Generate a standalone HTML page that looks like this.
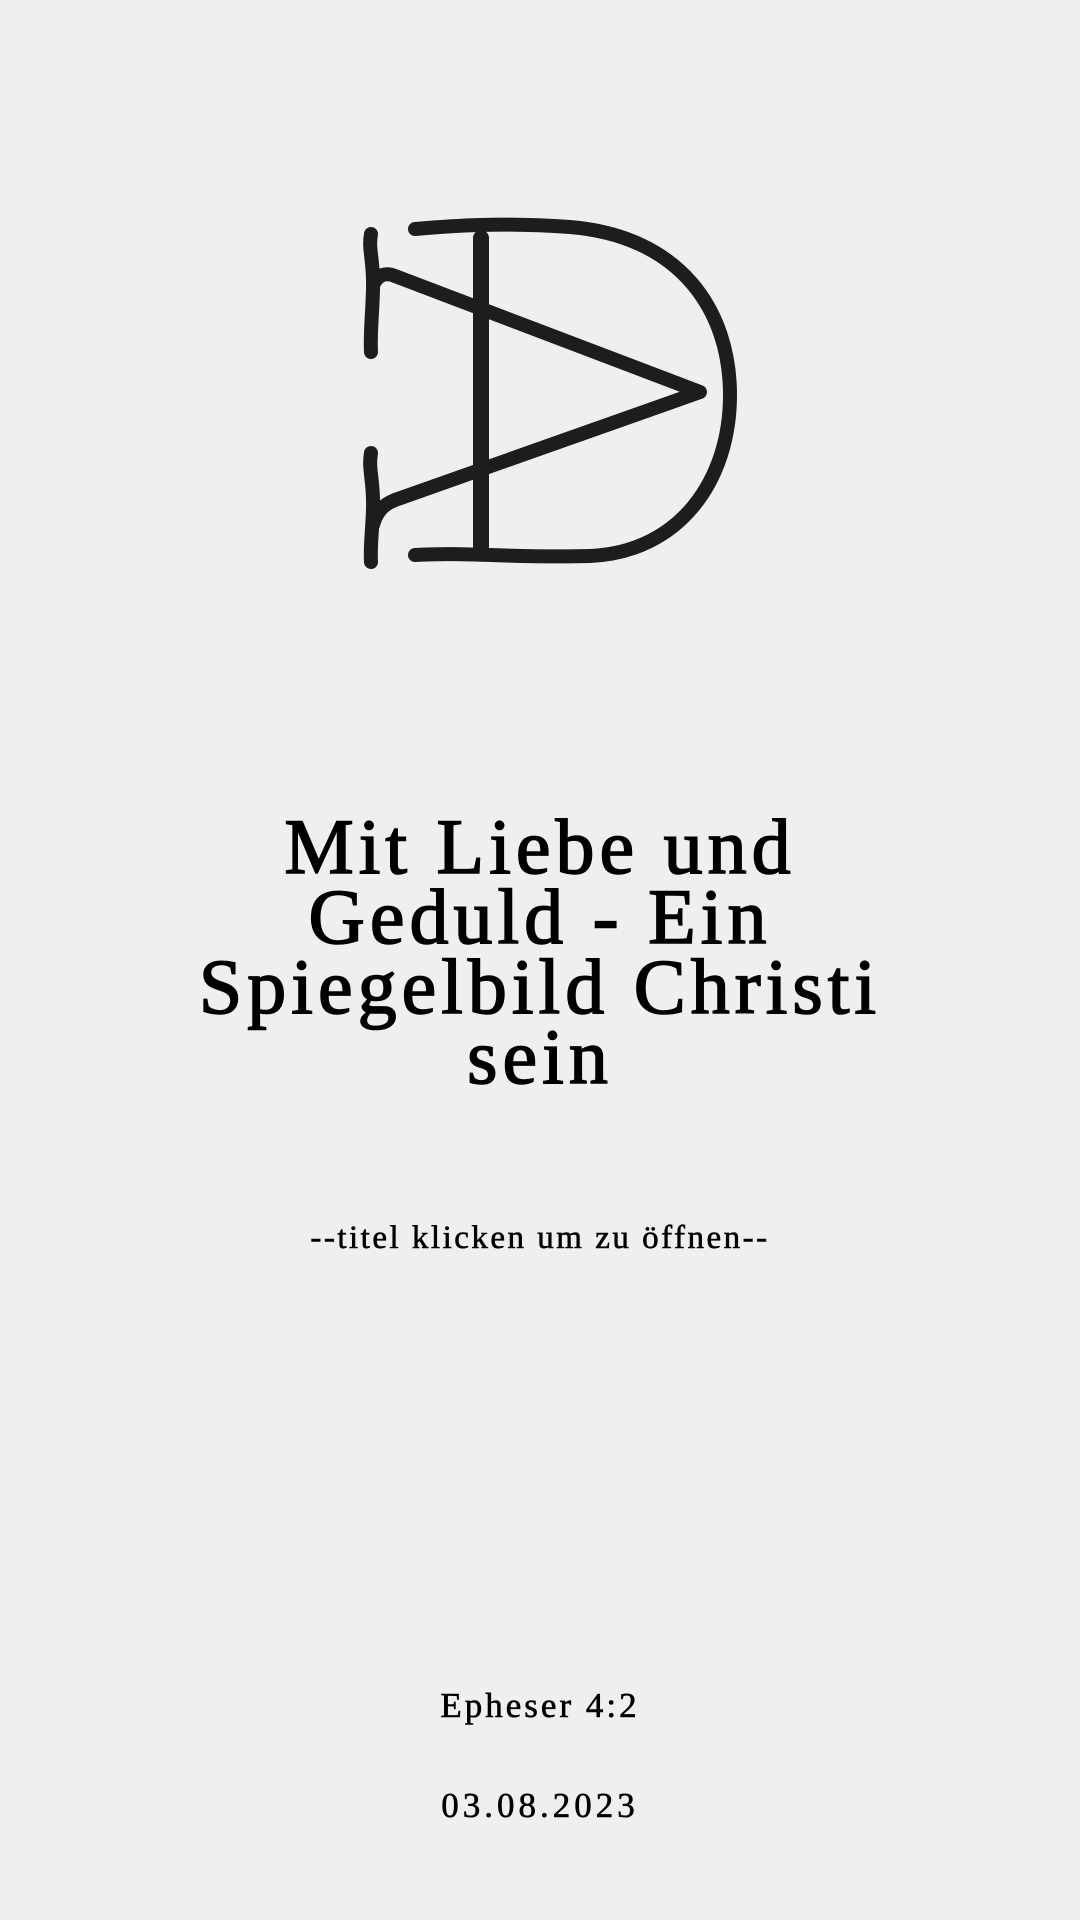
<!DOCTYPE html>
<html><head><meta charset="utf-8">
<style>
html,body{margin:0;padding:0;}
body{width:1080px;height:1920px;background:#efefef;position:relative;overflow:hidden;font-family:"Liberation Serif",serif;color:#000;-webkit-text-stroke:1.2px #000;}
.t{position:absolute;left:0;width:1080px;text-align:center;}
#title{top:812px;font-size:78px;line-height:70px;letter-spacing:5px;-webkit-text-stroke:1.6px #000;}
#sub{top:1218px;font-size:33px;line-height:40px;letter-spacing:2.5px;-webkit-text-stroke:0.6px #000;}
#ref{top:1686px;font-size:35px;line-height:40px;letter-spacing:3px;-webkit-text-stroke:0.6px #000;}
#date{top:1786px;font-size:35px;line-height:40px;letter-spacing:4px;-webkit-text-stroke:0.6px #000;}
</style></head><body>
<svg width="1080" height="700" style="position:absolute;left:0;top:0" viewBox="0 0 1080 700">
<g fill="none" stroke="#1c1e1e" stroke-width="14" stroke-linecap="round" stroke-linejoin="round">
<path d="M415,229 C450,226 500,222 570,227 C680,236 730,310 730,395 C730,480 680,552 590,556 C510,558 470,552 415,555"/>
<path d="M481,238 L481,546" stroke-width="16"/>
<path d="M371,234 C368,250 374,260 373,290 C372,320 370,335 371,352"/>
<path d="M371,453 C368,470 374,480 373,510 C372,535 370,548 371,562"/>
<path d="M373,285 C378,275 385,272 395,276 L700,392 L395,500 C385,504 377,510 373,525"/>
</g>
</svg>
<div class="t" id="title">Mit Liebe und<br>Geduld - Ein<br>Spiegelbild Christi<br>sein</div>
<div class="t" id="sub">--titel klicken um zu öffnen--</div>
<div class="t" id="ref">Epheser 4:2</div>
<div class="t" id="date">03.08.2023</div>
</body></html>
